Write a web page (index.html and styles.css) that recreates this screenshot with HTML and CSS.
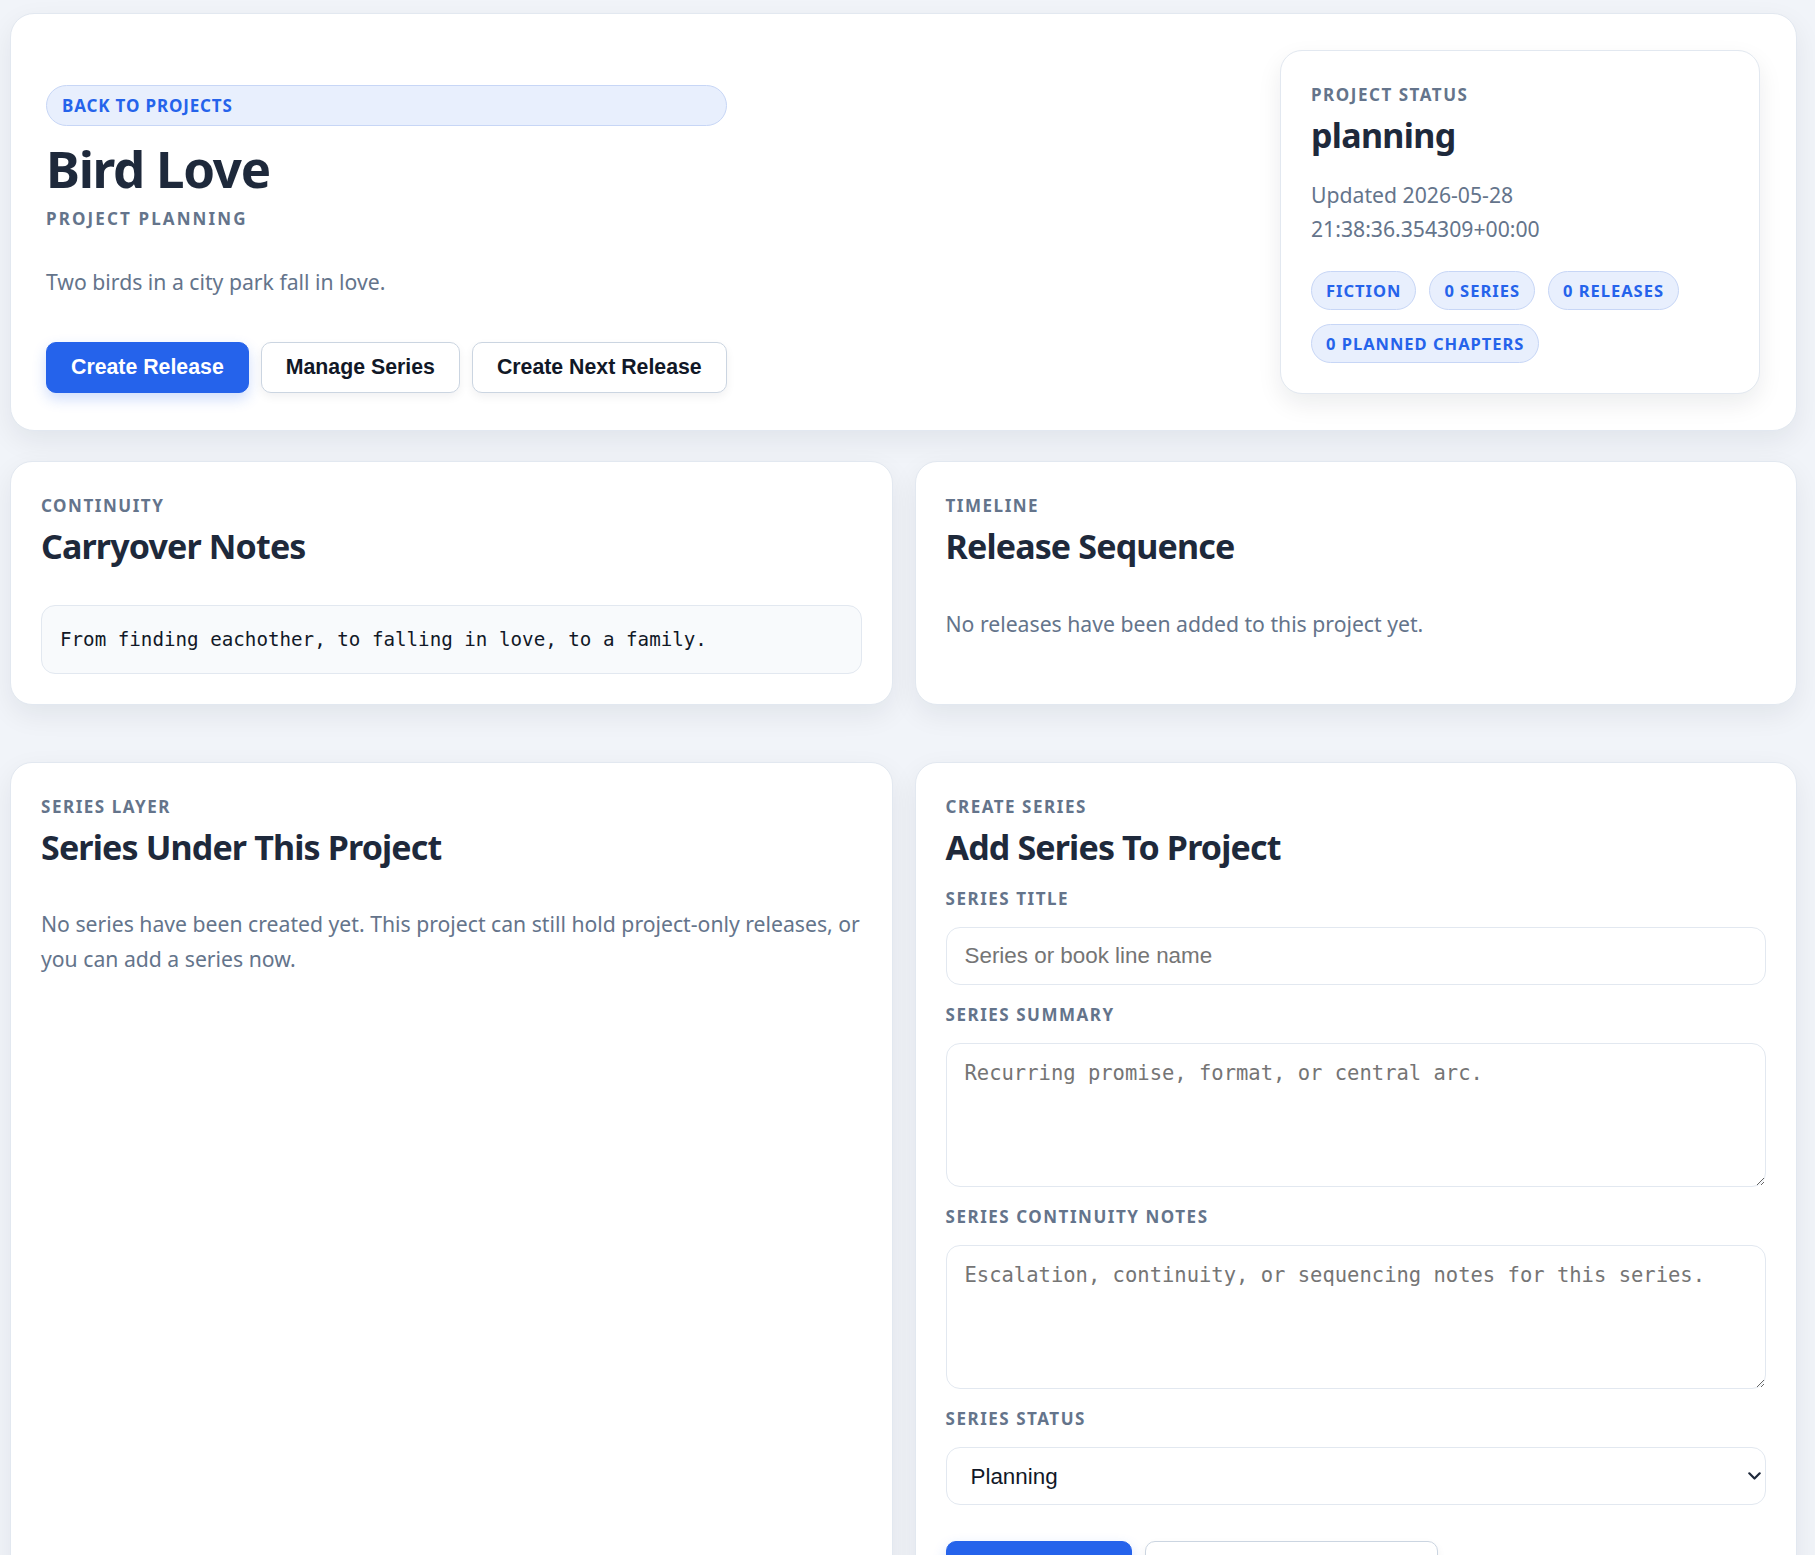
FILE: index.html
```html
<!DOCTYPE html>
<html lang="en">
<head>
    <meta charset="UTF-8">
    <meta name="viewport" content="width=device-width, initial-scale=1.0">
    <title>Bird Love - Project</title>
    <link rel="stylesheet" href="styles.css">
</head>
<body>

<main class="page">

    <section class="card hero">
        <div class="hero-main">
            <a class="back-link" href="#">Back to projects</a>
            <h1>Bird Love</h1>
            <p class="hero-kicker">Project planning</p>
            <p class="lede">Two birds in a city park fall in love.</p>
            <div class="actions">
                <button class="btn btn-primary">Create Release</button>
                <button class="btn">Manage Series</button>
                <button class="btn">Create Next Release</button>
            </div>
        </div>

        <aside class="status-card">
            <p class="eyebrow status-label">Project status</p>
            <h3 class="status-value">planning</h3>
            <p class="muted">Updated 2026-05-28<br>21:38:36.354309+00:00</p>
            <div class="pills">
                <span class="pill">Fiction</span>
                <span class="pill">0 series</span>
                <span class="pill">0 releases</span>
                <span class="pill">0 planned chapters</span>
            </div>
        </aside>
    </section>

    <div class="two-col">
        <section class="card">
            <p class="eyebrow">Continuity</p>
            <h2>Carryover Notes</h2>
            <pre class="notes">From finding eachother, to falling in love, to a family.</pre>
        </section>

        <section class="card">
            <p class="eyebrow">Timeline</p>
            <h2>Release Sequence</h2>
            <p class="muted spaced">No releases have been added to this project yet.</p>
        </section>
    </div>

    <div class="two-col lower">
        <section class="card">
            <p class="eyebrow">Series layer</p>
            <h2>Series Under This Project</h2>
            <p class="muted spaced">No series have been created yet. This project can still hold project-only releases, or you can add a series now.</p>
        </section>

        <section class="card">
            <p class="eyebrow">Create series</p>
            <h2>Add Series To Project</h2>
            <form class="series-form" onsubmit="return false">
                <div class="field">
                    <label class="eyebrow" for="title">Series title</label>
                    <input type="text" id="title" placeholder="Series or book line name">
                </div>
                <div class="field">
                    <label class="eyebrow" for="summary">Series summary</label>
                    <textarea id="summary" placeholder="Recurring promise, format, or central arc."></textarea>
                </div>
                <div class="field">
                    <label class="eyebrow" for="continuity">Series continuity notes</label>
                    <textarea id="continuity" placeholder="Escalation, continuity, or sequencing notes for this series."></textarea>
                </div>
                <div class="field">
                    <label class="eyebrow" for="status">Series status</label>
                    <div class="select-wrap">
                        <select id="status">
                            <option>Planning</option>
                            <option>Drafting</option>
                            <option>Published</option>
                        </select>
                        <svg class="chevron" width="13" height="8" viewBox="0 0 13 8" aria-hidden="true">
                            <path d="M1.3 1.3 6.5 6.5l5.2-5.2" fill="none" stroke="#1e293b" stroke-width="2.2" stroke-linecap="round" stroke-linejoin="round"/>
                        </svg>
                    </div>
                </div>
                <div class="actions form-actions">
                    <button class="btn btn-primary">Create Series</button>
                    <button class="btn">Open Series Workspace</button>
                </div>
            </form>
        </section>
    </div>

</main>

</body>
</html>
```
FILE: styles.css
```css
* {
    box-sizing: border-box;
}

body {
    margin: 0;
    font-family: "Noto Sans", sans-serif;
    color: #1e293b;
    background-color: #f1f4f9;
}

.page {
    padding: 13px 18px 40px 10px;
}

.card {
    background: #fff;
    border: 1px solid #e2e8f0;
    border-radius: 22px;
    padding: 30px;
    box-shadow: 0 10px 28px rgba(15, 23, 42, 0.07);
}

/* top block */

.hero {
    display: flex;
    justify-content: space-between;
    align-items: flex-end;
    padding: 36px 36px 36px 35px;
    border-radius: 24px;
}

.hero-main {
    display: flex;
    flex-direction: column;
    align-items: flex-start;
    margin-bottom: 1px;
}

.back-link {
    align-self: stretch;
    display: block;
    padding: 9px 15px;
    font-size: 17px;
    line-height: 21px;
    font-weight: 700;
    letter-spacing: 0.05em;
    text-transform: uppercase;
    text-decoration: none;
    color: #2563eb;
    background: #e8effd;
    border: 1px solid #c7d6f6;
    border-radius: 999px;
}

h1 {
    margin: 14px 0 0;
    font-size: 51px;
    line-height: 1.1;
    font-weight: 700;
    letter-spacing: -0.025em;
}

.hero-kicker {
    margin: 10px 0 0;
    font-size: 17px;
    line-height: 25px;
    font-weight: 700;
    letter-spacing: 0.125em;
    text-transform: uppercase;
    color: #64748b;
}

.lede {
    margin: 34px 0 0;
    font-size: 21.2px;
    line-height: 34px;
    color: #64748b;
}

.actions {
    display: flex;
    gap: 12px;
    margin-top: 43px;
}

.btn {
    padding: 12px 24px;
    font-family: "Liberation Sans", Arial, sans-serif;
    font-size: 21.3px;
    font-weight: 700;
    color: #111827;
    background: #fff;
    border: 1px solid #cbd5e1;
    border-radius: 10px;
    box-shadow: 0 4px 10px rgba(15, 23, 42, 0.06);
    cursor: pointer;
}

.btn-primary {
    color: #fff;
    background: #2563eb;
    border-color: #2563eb;
    box-shadow: 0 6px 14px rgba(37, 99, 235, 0.22);
}

.status-card {
    width: 480px;
    padding: 30px;
    background: #fff;
    border: 1px solid #e2e8f0;
    border-radius: 22px;
    box-shadow: 0 10px 24px rgba(15, 23, 42, 0.08);
}

.status-label {
    font-size: 18px;
    line-height: 25px;
    letter-spacing: 0.14em;
}

.status-value {
    margin: 7px 0 0;
    font-size: 34px;
    line-height: 1.2;
    font-weight: 700;
    letter-spacing: -0.02em;
}

.status-card .muted {
    margin-top: 22px;
}

.pills {
    display: flex;
    flex-wrap: wrap;
    gap: 14px 13px;
    margin-top: 24px;
}

.pill {
    padding: 8px 14px;
    font-size: 16.5px;
    line-height: 21px;
    font-weight: 700;
    letter-spacing: 0.06em;
    text-transform: uppercase;
    color: #2563eb;
    background: #e8effd;
    border: 1px solid #c7d6f6;
    border-radius: 999px;
}

/* shared text */

.eyebrow {
    display: block;
    margin: 0;
    font-size: 17px;
    line-height: 27px;
    font-weight: 700;
    letter-spacing: 0.09em;
    text-transform: uppercase;
    color: #64748b;
}

h2 {
    margin: 7px 0 0;
    font-size: 34px;
    line-height: 1.2;
    font-weight: 700;
    letter-spacing: -0.025em;
}

.muted {
    margin: 0;
    font-size: 21.2px;
    line-height: 34.5px;
    color: #64748b;
}

.spaced {
    margin-top: 40px;
}

/* panels */

.two-col {
    display: grid;
    grid-template-columns: 1fr 1fr;
    gap: 22px;
    margin-top: 30px;
}

.two-col.lower {
    margin-top: 57px;
}

.notes {
    margin: 38px 0 0;
    padding: 20px 18px;
    font-family: "DejaVu Sans Mono", monospace;
    font-size: 19.2px;
    line-height: 27px;
    color: #111827;
    white-space: pre-wrap;
    background: #f8fafc;
    border: 1px solid #e2e8f0;
    border-radius: 14px;
}

/* form */

.series-form {
    display: flex;
    flex-direction: column;
    gap: 16px;
    margin-top: 18px;
}

.field {
    display: flex;
    flex-direction: column;
    gap: 15px;
}

input, textarea, select {
    width: 100%;
    color: #1e293b;
    background: #fff;
    border: 1px solid #e2e8f0;
    border-radius: 14px;
}

input, select {
    height: 58px;
    padding: 0 18px;
    font-family: "Liberation Sans", Arial, sans-serif;
    font-size: 22.4px;
}

.select-wrap {
    position: relative;
}

select {
    display: block;
    padding-left: 24px;
    color: #111827;
    appearance: none;
    -webkit-appearance: none;
}

.chevron {
    position: absolute;
    right: 5px;
    top: 50%;
    transform: translateY(-50%);
    pointer-events: none;
}

textarea {
    height: 144px;
    padding: 17px 18px;
    font-family: "DejaVu Sans Mono", monospace;
    font-size: 20.5px;
    resize: vertical;
}

::placeholder {
    color: #757575;
}

.form-actions {
    margin-top: 20px;
    gap: 13px;
}
```
